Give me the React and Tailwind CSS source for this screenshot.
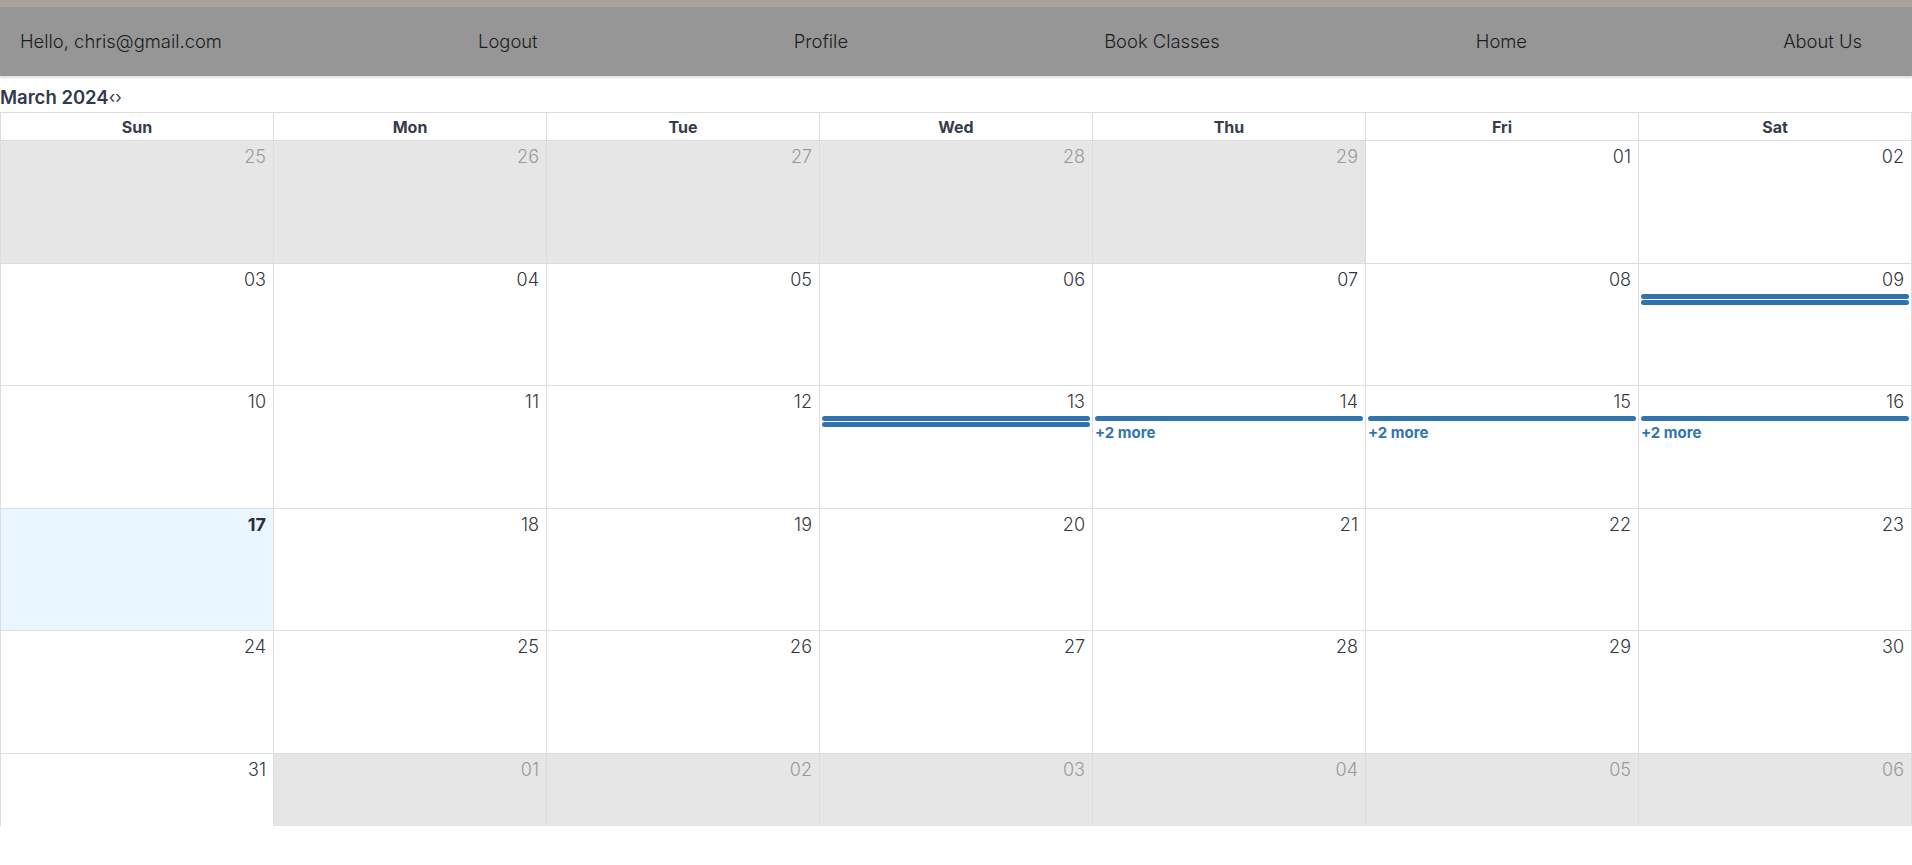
import React from 'react';

const days = ['Sun', 'Mon', 'Tue', 'Wed', 'Thu', 'Fri', 'Sat'];

const weeks = [
  [['25', true], ['26', true], ['27', true], ['28', true], ['29', true], ['01'], ['02']],
  [['03'], ['04'], ['05'], ['06'], ['07'], ['08'], ['09']],
  [['10'], ['11'], ['12'], ['13'], ['14'], ['15'], ['16']],
  [['17'], ['18'], ['19'], ['20'], ['21'], ['22'], ['23']],
  [['24'], ['25'], ['26'], ['27'], ['28'], ['29'], ['30']],
  [['31'], ['01', true], ['02', true], ['03', true], ['04', true], ['05', true], ['06', true]],
];

// bars per date + hidden count
const events = {
  '09': { bars: 2 },
  '13': { bars: 2 },
  '14': { bars: 1, more: 2 },
  '15': { bars: 1, more: 2 },
  '16': { bars: 1, more: 2 },
};

const Cell = ({ day, off, week }) => {
  const today = week === 3 && day === '17';
  const ev = !off ? events[day] : null;
  let bg = 'bg-white';
  if (off) bg = 'bg-[#e6e6e6]';
  if (today) bg = 'bg-[#eaf6ff]';
  return (
    <div className={`${bg} border-r border-b border-[#dddddd] flex flex-col min-w-0`}>
      <div
        className={`text-right pr-[7px] pt-[4px] text-[18px] leading-[24px] ${
          off ? 'text-[#999999] font-light' : today ? 'text-[#2b2f3a] font-bold' : 'text-[#333740] font-light'
        }`}
      >
        {day}
      </div>
      {ev && (
        <div className="mt-[2px] flex flex-col gap-[1px] px-[2px]">
          {Array.from({ length: ev.bars }).map((_, i) => (
            <div key={i} className="h-[5px] rounded-full bg-[#3174ad]" />
          ))}
          {ev.more && (
            <div className="text-[15px] leading-[18px] font-bold text-[#3174ad] mt-[2px]">
              +{ev.more} more
            </div>
          )}
        </div>
      )}
    </div>
  );
};

export default function App() {
  return (
    <div className="w-full min-h-[865px] bg-white" style={{ fontFamily: 'Inter, "Noto Sans", sans-serif' }}>
      <div className="h-[7px] bg-[#aba39f]" />
      <nav className="h-[69px] bg-[#969696] flex items-center justify-between pl-5 pr-[50px] text-[18.4px] font-light text-[#1c1c1c] shadow-[0_2px_2px_rgba(0,0,0,0.12)]">
        <span>Hello, chris@gmail.com</span>
        <span>Logout</span>
        <span>Profile</span>
        <span>Book Classes</span>
        <span>Home</span>
        <span>About Us</span>
      </nav>

      <div className="h-[36px] flex items-end pb-[5px]">
        <span className="text-[18.5px] leading-[20px] font-semibold text-[#333a4d]">March 2024</span>
        <span className="text-[17px] leading-[20px] text-[#333a4d]">‹›</span>
      </div>

      <div className="h-[714px] overflow-hidden border-l border-t border-[#dddddd]">
        <div className="grid grid-cols-7 h-[28px]">
          {days.map((d) => (
            <div
              key={d}
              className="border-r border-b border-[#dddddd] flex items-center justify-center text-[16px] font-bold text-[#373c4d]"
            >
              {d}
            </div>
          ))}
        </div>
        {weeks.map((w, wi) => (
          <div key={wi} className="grid grid-cols-7 h-[122.5px]">
            {w.map(([d, off], di) => (
              <Cell key={di} day={d} off={!!off} week={wi} />
            ))}
          </div>
        ))}
      </div>
    </div>
  );
}
